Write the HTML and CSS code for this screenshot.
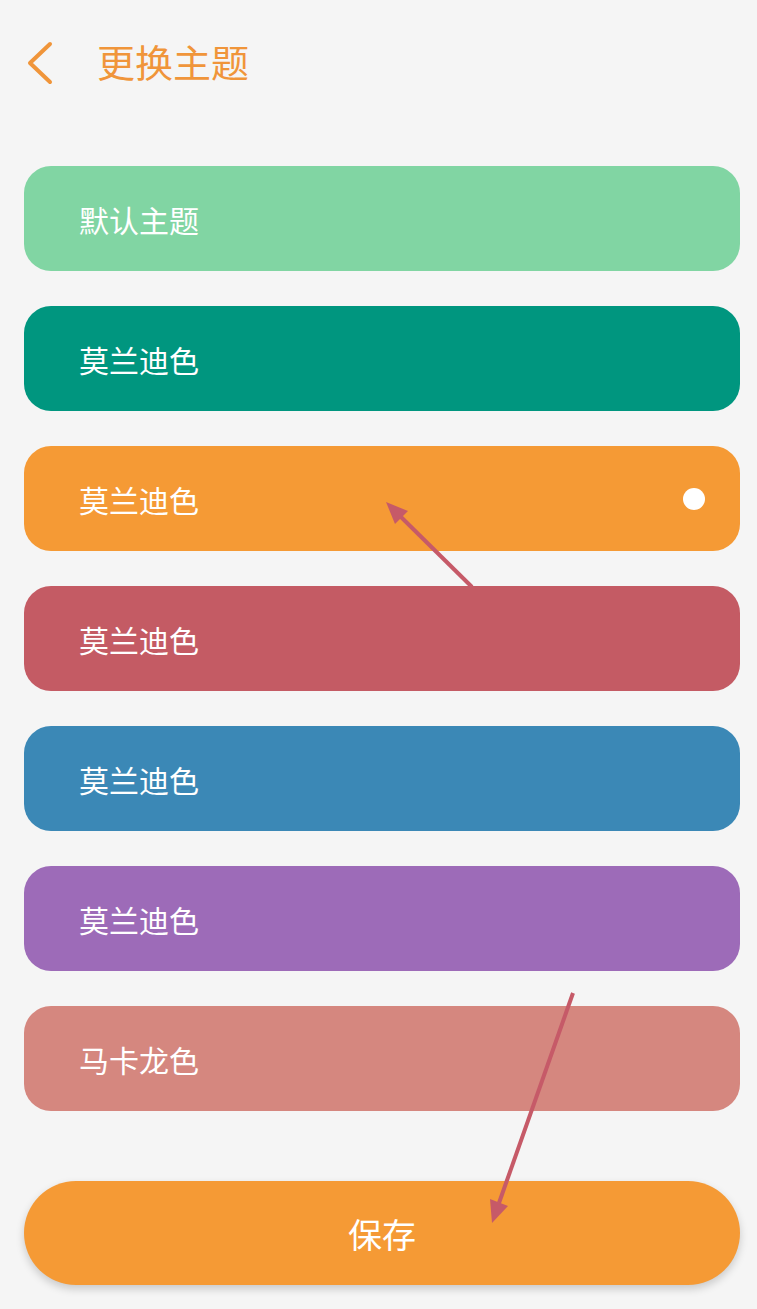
FILE: index.html
```html
<!DOCTYPE html>
<html lang="zh-CN">
<head>
  <meta charset="UTF-8" />
  <meta name="viewport" content="width=device-width, initial-scale=1.0"/>
  <title>更换主题</title>
  <link rel="stylesheet" href="styles.css">
</head>
<body>
  <div class="page">
    <!-- Header -->
    <div class="header">
      <svg class="back" width="30" height="44" viewBox="0 0 30 44">
        <polyline points="23,3 3,22 23,41" fill="none" stroke="#f0953a" stroke-width="4" stroke-linecap="round" stroke-linejoin="round"/>
      </svg>
      <h1 class="title">更换主题</h1>
    </div>

    <!-- Theme list -->
    <div class="themes">
      <div class="theme green">默认主题</div>
      <div class="theme teal">莫兰迪色</div>
      <div class="theme orange active">莫兰迪色<span class="dot"></span></div>
      <div class="theme red">莫兰迪色</div>
      <div class="theme blue">莫兰迪色</div>
      <div class="theme purple">莫兰迪色</div>
      <div class="theme salmon">马卡龙色</div>
    </div>

    <button class="save-btn">保存</button>

    <!-- Annotation arrows -->
    <svg class="marks" width="757" height="1309" viewBox="0 0 757 1309">
      <line x1="472" y1="587" x2="401" y2="517" stroke="#c65a68" stroke-width="4"/>
      <polygon points="386,502 395,524 408,511" fill="#c65a68"/>
      <line x1="573" y1="993" x2="499" y2="1203" stroke="#c65a68" stroke-width="4"/>
      <polygon points="492,1223 490,1199 508,1206" fill="#c65a68"/>
    </svg>
  </div>
</body>
</html>
```

FILE: styles.css
```css
body {
  margin: 0;
  background: #f5f5f5;
  font-family: "Noto Sans CJK SC", "Noto Sans", sans-serif;
}

.page {
  position: relative;
  width: 757px;
  min-height: 1309px;
  padding: 0 17px 0 24px;
  box-sizing: border-box;
}

.header {
  height: 126px;
  display: flex;
  align-items: center;
}

.back {
  margin-left: 3px;
}

.title {
  margin: 0 0 0 40px;
  padding-bottom: 5px;
  font-size: 38px;
  font-weight: 400;
  color: #f0953a;
  line-height: 1;
}

.themes {
  margin-top: 40px;
  display: flex;
  flex-direction: column;
  gap: 35px;
}

.theme {
  height: 105px;
  border-radius: 27px;
  padding: 0 35px 0 55px;
  display: flex;
  align-items: center;
  color: #fff;
  font-size: 30px;
}

.theme.green { background: #81d5a3; }
.theme.teal { background: #00967f; }
.theme.orange { background: #f59a35; }
.theme.red { background: #c45b64; }
.theme.blue { background: #3b88b6; }
.theme.purple { background: #9d6bb8; }
.theme.salmon { background: #d5877f; }

.dot {
  margin-left: auto;
  width: 22px;
  height: 22px;
  border-radius: 50%;
  background: #fff;
}

.save-btn {
  display: block;
  width: 100%;
  height: 104px;
  margin-top: 70px;
  border: none;
  border-radius: 52px;
  background: #f59a35;
  color: #fff;
  font-family: inherit;
  font-size: 34px;
  box-shadow: 0 4px 8px rgba(0, 0, 0, 0.18);
}

.marks {
  position: absolute;
  left: 0;
  top: 0;
  pointer-events: none;
}
```
